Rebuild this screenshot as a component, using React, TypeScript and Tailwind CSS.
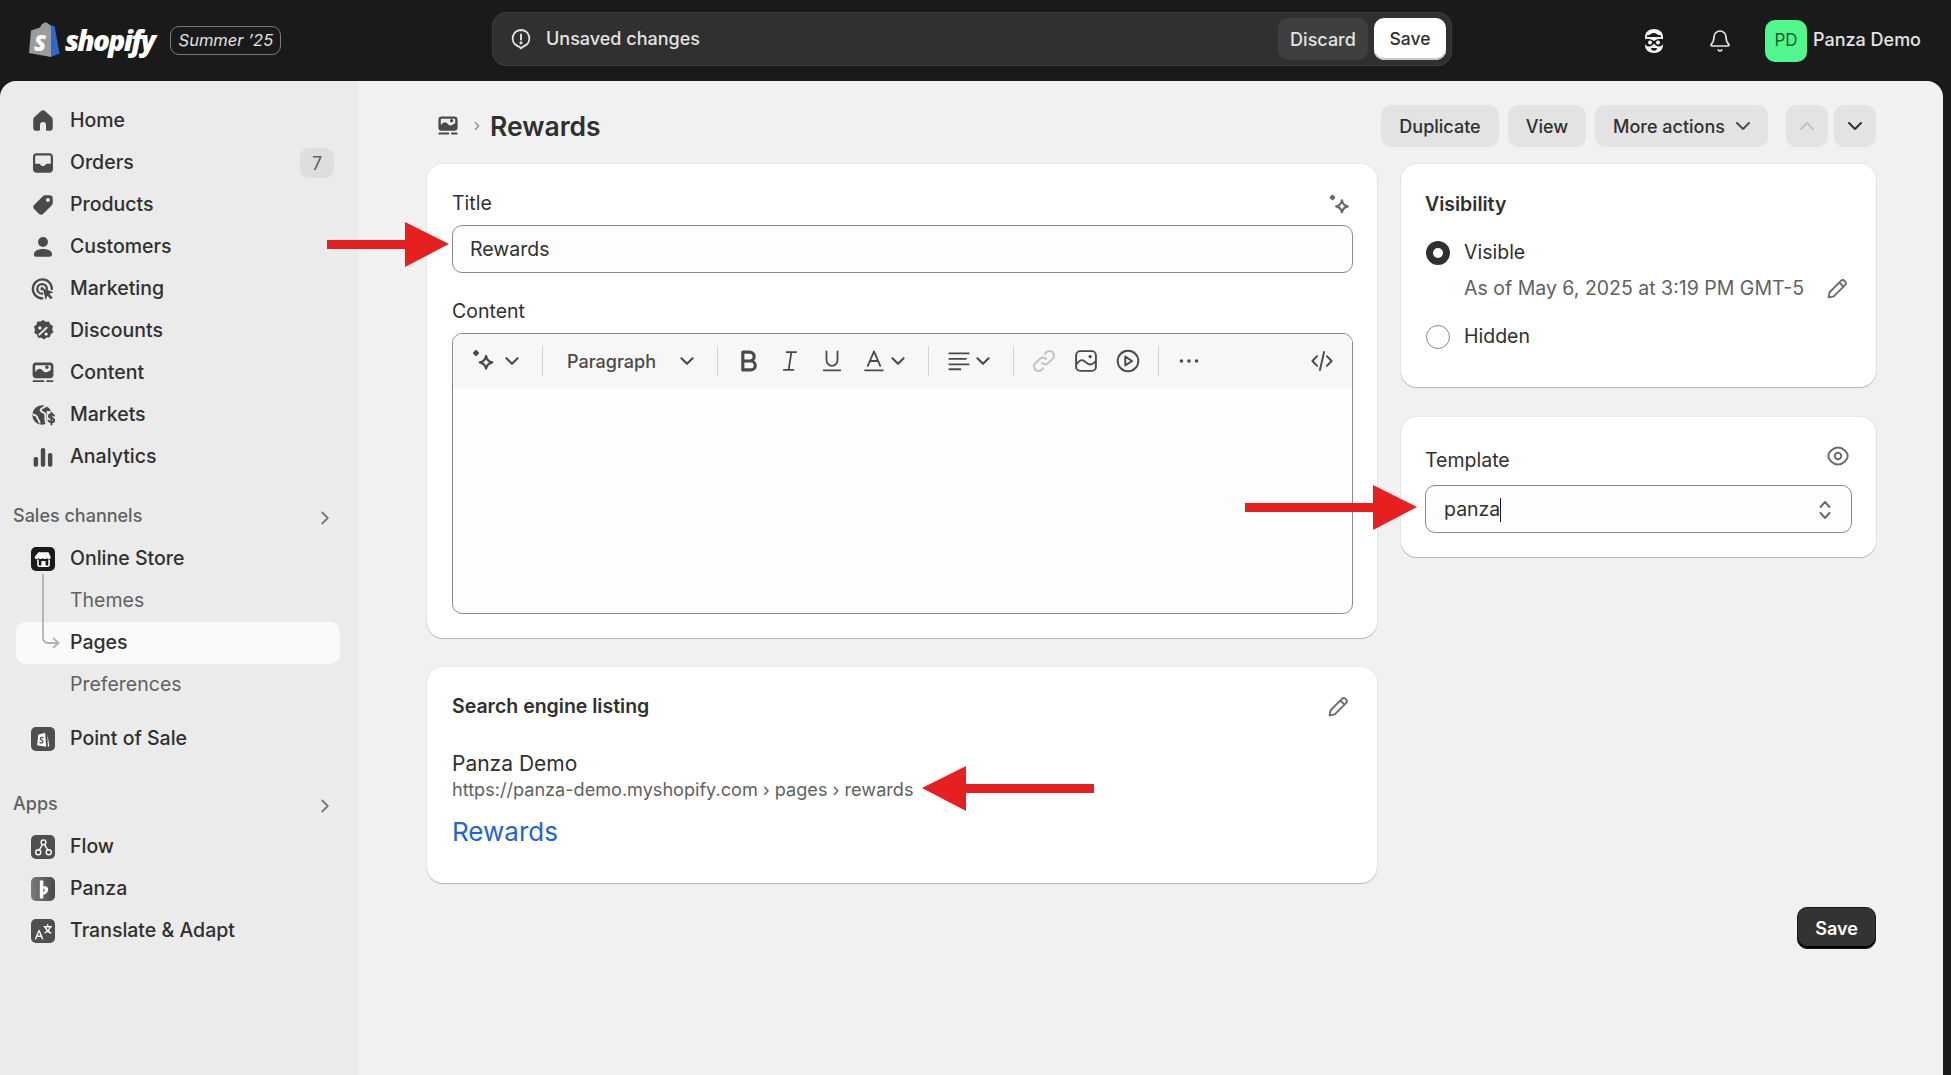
import { ChevronDown, ChevronRight, ChevronUp, Bell } from "lucide-react";
import type { ReactNode } from "react";

const ic = "w-[26px] h-[26px] shrink-0";

function Glyph({ children, className = ic }: { children: ReactNode; className?: string }) {
  return (
    <svg viewBox="0 0 20 20" fill="#4a4a4a" className={className}>
      {children}
    </svg>
  );
}

const HomeIcon = () => (
  <Glyph>
    <path d="M10 1.800c-.6 0-1.200.2-1.700.7L3.400 7c-.6.5-.9 1.200-.9 2v6.300c0 1.300 1 2.200 2.200 2.200h2c.6 0 1-.4 1-1V13a2.200 2.200 0 0 1 4.600 0v3.500c0 .6.4 1 1 1h2c1.200 0 2.200-.9 2.200-2.200V9c0-.8-.3-1.500-.9-2l-4.900-4.500c-.5-.5-1.100-.7-1.700-.7z" />
  </Glyph>
);
const OrdersIcon = () => (
  <Glyph>
    <path
      fillRule="evenodd"
      d="M5 2.500h10c1.500 0 2.700 1.200 2.700 2.700v9.600c0 1.500-1.200 2.700-2.700 2.700H5c-1.500 0-2.700-1.200-2.700-2.700V5.200C2.300 3.700 3.500 2.500 5 2.500zm-1 8h2.800c.7 0 1 .4 1.300.9.400.7 1 1 1.900 1s1.500-.3 1.900-1c.3-.5.6-.9 1.300-.9H16V5.200c0-.6-.4-1-1-1H5c-.6 0-1 .4-1 1z"
    />
  </Glyph>
);
const ProductsIcon = () => (
  <Glyph>
    <path
      fillRule="evenodd"
      d="M11.800 2.500h3.400c1.300 0 2.300 1 2.300 2.300v3.400c0 .8-.3 1.500-.9 2.100l-6.400 6.400c-1 1-2.500 1-3.400 0l-3.500-3.500c-1-.9-1-2.400 0-3.400l6.400-6.400c.6-.6 1.300-.9 2.100-.9zm2 5.200a1.500 1.500 0 1 0 0-3 1.500 1.500 0 0 0 0 3z"
    />
  </Glyph>
);
const CustomersIcon = () => (
  <Glyph>
    <circle cx="10" cy="6.200" r="3.800" />
    <path d="M3 15.800c0-2.700 3-4.300 7-4.300s7 1.600 7 4.300c0 1-.7 1.700-1.700 1.700H4.700C3.700 17.500 3 16.800 3 15.800z" />
  </Glyph>
);
const MarketingIcon = () => (
  <Glyph>
    <path
      fill="none"
      stroke="#4a4a4a"
      strokeWidth="1.800"
      strokeLinecap="round"
      d="M9.500 17.200A7.300 7.300 0 1 1 16.800 10M9.300 13.600A3.700 3.700 0 1 1 13 9.800"
    />
    <circle cx="9.300" cy="9.800" r="1.300" />
    <path d="M9.800 9.500l8.200 3-3.200 1.300 2.600 2.700-1.400 1.400-2.600-2.700-1.300 3.200z" />
  </Glyph>
);
const DiscountsIcon = () => (
  <Glyph>
    <path
      fillRule="evenodd"
      d="M10 1.500l2.100 1.300 2.500-.2.900 2.300 2.200 1.300-.6 2.400.9 2.400-2 1.500-.7 2.400-2.500.1-2 1.500-2.100-1.400-2.500.1-.8-2.400-2.100-1.400.6-2.400-.9-2.300 2-1.600.6-2.400 2.500-.1zM7.600 6.300a1.300 1.300 0 1 0 0 2.600 1.300 1.300 0 0 0 0-2.600zm4.800 4.800a1.300 1.300 0 1 0 0 2.600 1.300 1.300 0 0 0 0-2.600zm.3-4.600L6.200 12.700l1.100 1 6.500-6.200z"
    />
  </Glyph>
);
const ContentIcon = ({ className = ic }: { className?: string }) => (
  <Glyph className={className}>
    <path
      fillRule="evenodd"
      d="M4.500 2h11C16.900 2 18 3.100 18 4.500v7c0 1.400-1.100 2.500-2.500 2.500h-11C3.100 14 2 12.900 2 11.500v-7C2 3.100 3.100 2 4.500 2zM4 9.200c1.300-1.600 2.500-2.400 3.500-2.400 1.800 0 2.600 2.700 4.500 2.700 1.100 0 2.400-.6 4-1.900V4.500c0-.3-.2-.5-.5-.5h-11c-.3 0-.5.2-.5.500zM13 7a1.400 1.400 0 1 0 0-2.800A1.400 1.400 0 0 0 13 7z"
    />
    <rect x="2" y="15.500" width="9" height="1.500" rx=".7" />
    <rect x="12.500" y="15.500" width="5.500" height="1.500" rx=".7" />
  </Glyph>
);
const MarketsIcon = () => (
  <Glyph>
    <circle cx="9.300" cy="10" r="7.500" />
    <path fill="none" stroke="#ebebeb" strokeWidth="1.500" d="M12.500 2.500c-.8 2.300-3.800 1.500-4.300 3.500s3 1.500 3.500 3.500-.6 3.500 1 7.500M2 9.500c2 .3 3.400 1.500 3.800 3 .3 1.200 1.500 1.500 1.700 4" />
    <rect x="12.800" y="7" width="7.200" height="12" fill="#ebebeb" />
    <path
      fill="none"
      stroke="#4a4a4a"
      strokeWidth="1.500"
      strokeLinecap="round"
      d="M18.400 10.500c-.3-.7-1-1.100-1.900-1.100-1.100 0-1.900.6-1.900 1.500 0 2 4 1.100 4 3.200 0 .9-.9 1.500-2 1.500-1 0-1.800-.4-2.200-1.200M16.500 8.200v9.200"
    />
  </Glyph>
);
const AnalyticsIcon = () => (
  <Glyph>
    <rect x="2.800" y="10" width="3.400" height="7.500" rx="1.400" />
    <rect x="8.300" y="3" width="3.400" height="14.500" rx="1.400" />
    <rect x="13.800" y="7" width="3.400" height="10.500" rx="1.400" />
  </Glyph>
);
const OnlineStoreIcon = () => (
  <span className="ml-[1px] w-[24px] h-[24px] rounded-[5px] bg-[#1a1a1a] flex items-center justify-center shrink-0">
    <svg viewBox="0 0 20 20" className="w-[21px] h-[21px]">
      <path fill="#fff" d="M5.200 3h9.600l2 4.300c.3 1.300-.6 2.300-1.700 2.300-.9 0-1.600-.5-1.900-1.100-.4.600-1.100 1.100-2 1.100-.9 0-1.600-.5-2-1.100-.4.600-1.100 1.100-2 1.100-.9 0-1.600-.5-1.900-1.100-.3.600-1 1.100-1.900 1.100-1.100 0-2-1-1.700-2.300z" />
      <path fill="none" stroke="#fff" strokeWidth="1.500" d="M4.700 10v5.200c0 .7.500 1.200 1.200 1.200h8.200c.7 0 1.200-.5 1.200-1.200V10" />
      <rect x="8" y="11.500" width="4" height="5" fill="#fff" />
    </svg>
  </span>
);
function AppBox({ children, className = "bg-[#4f4f4f]" }: { children: ReactNode; className?: string }) {
  return (
    <span className={`ml-[1px] w-[24px] h-[24px] rounded-[5px] flex items-center justify-center shrink-0 ${className}`}>
      <svg viewBox="0 0 20 20" className="w-[21px] h-[21px]">
        {children}
      </svg>
    </span>
  );
}
const PosIcon = () => (
  <AppBox>
    <path fill="#fff" d="M5 5.500l6.500-2 1 13.500-8.500-1.500z" />
    <path fill="#fff" d="M13.800 5l1.700 11.500-1.400.3z" />
    <path fill="none" stroke="#4f4f4f" strokeWidth="1.300" strokeLinecap="round" d="M9.700 8.200c-1.500-.6-2.700 0-2.700 1 0 1.300 2.300 1.200 2.300 2.700 0 1.200-1.400 1.700-2.700 1" />
  </AppBox>
);
const FlowIcon = () => (
  <AppBox>
    <g fill="none" stroke="#fff" strokeWidth="1.300">
      <circle cx="10" cy="5" r="2.300" />
      <circle cx="5" cy="14.500" r="2.400" />
      <circle cx="15" cy="14.500" r="2.400" />
      <path d="M9 7.200l-3 5M11 7.200l3 5" />
    </g>
  </AppBox>
);
const PanzaIcon = () => (
  <AppBox className="bg-gradient-to-r from-[#7a7a7a] to-[#4a4a4a]">
    <path fill="#fff" d="M6.500 1.500h3.300v5.300h1.500c2 0 3.200 1.300 3.200 3.300 0 2.500-2 4.400-4.700 5.100v3.300H6.500zM9.800 8.800v3.700c.8-.4 1.300-1 1.300-1.900 0-1-.5-1.800-1.300-1.800z" />
  </AppBox>
);
const TranslateIcon = () => (
  <AppBox>
    <path fill="none" stroke="#fff" strokeWidth="1.300" strokeLinecap="round" strokeLinejoin="round" d="M2.500 17l3.300-8 3.300 8M3.800 14.500h4M10.500 5.500h7M14 3.500v2M11.500 11c2.500-1 4.200-3 4.700-5.500M12 6.500c.8 2.300 2.500 4 5 5" />
  </AppBox>
);
const Sparkle = ({ className = "w-[24px] h-[24px]", color = "#4a4a4a", box = "0 0 20 20" }: { className?: string; color?: string; box?: string }) => (
  <svg viewBox={box} className={className}>
    <rect x="2.400" y="2.400" width="3.600" height="3.600" rx=".8" fill={color} transform="rotate(45 4.200 4.200)" />
    <path fill="none" stroke={color} strokeWidth="1.700" strokeLinejoin="round" d="M11.500 6.500c.6 2.800 1.700 4 4.500 4.500-2.800.6-3.900 1.700-4.500 4.500-.6-2.800-1.700-3.900-4.500-4.500 2.800-.5 3.900-1.700 4.500-4.500z" />
  </svg>
);
const Pencil = () => (
  <svg viewBox="0 0 20 20" fill="none" stroke="#6b6b6b" strokeWidth="1.400" strokeLinejoin="round" className="w-[26px] h-[26px] mr-[2px]">
    <path d="M3.500 16.500l.8-4L13 3.800c.8-.8 2-.8 2.800 0l.4.400c.8.800.8 2 0 2.800L7.500 15.700zM11.800 5l3.200 3.200" />
  </svg>
);

function Arrow({ x, y, w, len, left }: { x: string; y: string; w: string; len: number; left?: boolean }) {
  // annotation arrows sitting on top of the screenshot
  const d = left
    ? `M0 22L44 0V18H${len}V27H44V45z`
    : `M${len} 22L${len - 44} 0V18H0V27H${len - 44}V45z`;
  return (
    <svg viewBox={`0 0 ${len} 46`} className={`absolute ${x} ${y} ${w} h-[46px]`}>
      <path fill="#e62020" d={d} />
    </svg>
  );
}

function NavItem({ icon, label, badge }: { icon: ReactNode; label: string; badge?: string }) {
  return (
    <div className="h-[42px] flex items-center pl-[30px] pr-[24px]">
      <span className="w-[40px] flex items-center">{icon}</span>
      <span className="text-[19.500px] text-[#303030] font-[450]">{label}</span>
      {badge && (
        <span className="ml-auto w-[34px] h-[30px] rounded-[9px] bg-[#dedede] text-[#616161] text-[18px] flex items-center justify-center">
          {badge}
        </span>
      )}
    </div>
  );
}

function SectionHead({ label }: { label: string }) {
  return (
    <div className="flex items-center justify-between pl-[13px] pr-[22px] h-[42px] mb-[2px]">
      <span className="text-[18px] font-[550] text-[#616161]">{label}</span>
      <ChevronRight className="w-[22px] h-[22px] mt-[5px] text-[#7a7a7a]" strokeWidth={2} />
    </div>
  );
}

function Sidebar() {
  return (
    <aside className="w-[358px] shrink-0 bg-[#ebebeb] pt-[19px]">
      <NavItem icon={<HomeIcon />} label="Home" />
      <NavItem icon={<OrdersIcon />} label="Orders" badge="7" />
      <NavItem icon={<ProductsIcon />} label="Products" />
      <NavItem icon={<CustomersIcon />} label="Customers" />
      <NavItem icon={<MarketingIcon />} label="Marketing" />
      <NavItem icon={<DiscountsIcon />} label="Discounts" />
      <NavItem icon={<ContentIcon />} label="Content" />
      <NavItem icon={<MarketsIcon />} label="Markets" />
      <NavItem icon={<AnalyticsIcon />} label="Analytics" />

      <div className="mt-[16px]">
        <SectionHead label="Sales channels" />
      </div>
      <div className="relative">
        <NavItem icon={<OnlineStoreIcon />} label="Online Store" />
        <div className="h-[42px] flex items-center pl-[70px] text-[19.500px] text-[#616161]">Themes</div>
        <div className="ml-[16px] mr-[18px] h-[42px] flex items-center pl-[54px] rounded-[10px] bg-[#fafafa] text-[19.500px] font-[550] text-[#303030]">
          Pages
        </div>
        <div className="h-[42px] flex items-center pl-[70px] text-[19.500px] text-[#616161]">Preferences</div>
        <svg className="absolute left-[40px] top-[36px] w-[22px] h-[76px]" viewBox="0 0 22 76" fill="none" stroke="#b5b0b5" strokeWidth="1.800">
          <path d="M3 0V63c0 4 1 6 5 6H18M13 64l5.500 5-5.500 5" />
        </svg>
      </div>
      <div className="mt-[12px]">
        <NavItem icon={<PosIcon />} label="Point of Sale" />
      </div>

      <div className="mt-[22px]">
        <SectionHead label="Apps" />
      </div>
      <NavItem icon={<FlowIcon />} label="Flow" />
      <NavItem icon={<PanzaIcon />} label="Panza" />
      <NavItem icon={<TranslateIcon />} label="Translate & Adapt" />
    </aside>
  );
}

function TopBar() {
  return (
    <header className="h-[81px] shrink-0 flex items-center pl-[29px] text-white">
      <svg viewBox="0 0 32 36" className="w-[32px] h-[36px] -mt-[2px]">
        <path fill="#9b9b9f" d="M2 8.500l9-3c1-3 3.500-5 5.500-5 1.300 0 2.300.6 3 1.500L22 3.500V35L0 31z" />
        <path fill="#2f66cf" d="M22 3.500l3.500.5L30.500 31.500 22 35z" />
        <path fill="none" stroke="#9b9b9f" strokeWidth="1.200" d="M12 8c.5-4 3-6.500 5-6.500s3 2.500 3 5" />
        <text x="5" y="29" fontSize="22" fontWeight="800" fontStyle="italic" fill="#fff" fontFamily="Open Sans, sans-serif">S</text>
      </svg>
      <span className="ml-[4px] [font-family:'Open_Sans',sans-serif] italic font-extrabold text-[28px] tracking-[-1.700px] leading-none -mt-[2px]">
        shopify
      </span>
      <span className="ml-[16px] w-[111px] h-[29px] rounded-[9px] border border-[#7a7a7a] flex items-center justify-center italic text-[16.500px] text-[#e3e3e3] -mt-[1px]">
        Summer ’25
      </span>

      <div className="absolute left-[492px] top-[12px] w-[960px] h-[54px] rounded-[14px] bg-[#303030] border border-[#3d3d3d] flex items-center pl-[16px] pr-[5px]">
        <svg viewBox="0 0 20 20" fill="none" stroke="#e3e3e3" strokeWidth="1.600" className="w-[24px] h-[24px]">
          <path strokeLinejoin="round" d="M10 2.500a7 7 0 0 1 3 13.300c-1 .5-2 1-3 2-1-1-2-1.500-3-2A7 7 0 0 1 10 2.500z" />
          <path strokeLinecap="round" d="M10 6.300v4.200" />
          <circle cx="10" cy="13.200" r=".5" fill="#e3e3e3" />
        </svg>
        <span className="ml-[13px] -mt-[1px] text-[18px] font-[500] text-[#e3e3e3]">Unsaved changes</span>
        <button className="ml-auto w-[90px] h-[42px] rounded-[10px] bg-[#3f3f3f] text-[18px] font-[550] text-[#e3e3e3]">Discard</button>
        <button className="ml-[6px] w-[72px] h-[42px] rounded-[10px] bg-white shadow-[inset_0_-2px_0_#c9c9c9] text-[17.500px] font-[550] text-[#303030]">Save</button>
      </div>

      <div className="ml-auto flex items-center pr-[30px]">
        <svg viewBox="0 0 24 26" className="w-[24px] h-[26px]">
          <path fill="#f5f5f5" d="M12 1c5 0 9 3 9 8v8c0 5-4 8-9 8s-9-3-9-8V9c0-5 4-8 9-8z" />
          <path fill="#1a1a1a" d="M5 7c3 1 4-2 7-2 2 0 3 1 4 2 2 0 3 0 3 1v1H5z" />
          <path fill="#1a1a1a" d="M2.500 11.500c3-1.500 6-.5 9.500 1.500 3.500-2 6.500-3 9.500-1.500v2c0 3-2 5-4.500 5-2.500 0-4-2-5-3-1 1-2.500 3-5 3-2.500 0-4.500-2-4.500-5z" />
          <circle cx="8" cy="14.500" r="2" fill="#f5f5f5" />
          <circle cx="16" cy="14.500" r="2" fill="#f5f5f5" />
          <path fill="#1a1a1a" d="M9 20h6c0 1.800-1.300 2.800-3 2.800S9 21.800 9 20z" />
        </svg>
        <Bell className="ml-[42px] w-[24px] h-[24px] text-[#e3e3e3]" strokeWidth={1.700} />
        <span className="ml-[33px] w-[42px] h-[42px] rounded-[10px] bg-[#4ff78d] text-[#1f5c3a] text-[17px] flex items-center justify-center">PD</span>
        <span className="ml-[6px] -mt-[2px] text-[18px] font-[550] text-[#e3e3e3]">Panza Demo</span>
      </div>
    </header>
  );
}

// viewBox is cropped so the 22px slots draw the glyphs a little larger, like the editor in the shot
const tbBtn = "w-[22px] h-[22px] shrink-0 overflow-visible";
const tbBox = "2 2 16 16";
const tbChev = "w-[16px] h-[16px] shrink-0 text-[#4a4a4a] scale-[1.4]";

function Divider({ className }: { className: string }) {
  return <span className={`w-px h-[30px] bg-[#d4d4d4] shrink-0 ${className}`} />;
}

function Toolbar() {
  return (
    <div className="h-[54px] bg-[#f7f7f7] rounded-t-[9px] flex items-center">
      <Sparkle className={`${tbBtn} ml-[20px]`} box={tbBox} />
      <ChevronDown className={`${tbChev} ml-[9px]`} strokeWidth={2.200} />
      <Divider className="ml-[22px]" />
      <span className="ml-[24px] w-[89px] text-[18px] text-[#4a4a4a] font-[450]">Paragraph</span>
      <ChevronDown className={`${tbChev} ml-[23px]`} strokeWidth={2.200} />
      <Divider className="ml-[22px]" />
      <svg viewBox={tbBox} className={`${tbBtn} ml-[20px]`} fill="none" stroke="#4a4a4a" strokeWidth="2.300" strokeLinejoin="round">
        <path d="M5.500 3.500h5a3.200 3.200 0 0 1 0 6.500h-5zM5.500 10h5.800a3.200 3.200 0 0 1 0 6.500H5.500z" />
      </svg>
      <svg viewBox={tbBox} className={`${tbBtn} ml-[19px]`} fill="none" stroke="#4a4a4a" strokeWidth="1.300" strokeLinecap="round">
        <path d="M7.500 3.500h7M5.500 16.500h7M11 3.500l-2 13" />
      </svg>
      <svg viewBox={tbBox} className={`${tbBtn} ml-[20px]`} fill="none" stroke="#4a4a4a" strokeWidth="1.300" strokeLinecap="round">
        <path d="M6 3v6.500a4 4 0 0 0 8 0V3M4 16.800h12" />
      </svg>
      <svg viewBox={tbBox} className={`${tbBtn} ml-[20px]`} fill="none" stroke="#4a4a4a" strokeWidth="1.300" strokeLinecap="round" strokeLinejoin="round">
        <path d="M5.500 13.500L10 3l4.500 10.500M7 10h6M3.500 16.800h13" />
      </svg>
      <ChevronDown className={`${tbChev} ml-[5px]`} strokeWidth={2.200} />
      <Divider className="ml-[22px]" />
      <svg viewBox={tbBox} className={`${tbBtn} ml-[19px]`} fill="none" stroke="#4a4a4a" strokeWidth="1.300" strokeLinecap="round">
        <path d="M3 4.500h14M3 8.500h12M3 12.500h14M3 16h8" />
      </svg>
      <ChevronDown className={`${tbChev} ml-[5px]`} strokeWidth={2.200} />
      <Divider className="ml-[22px]" />
      <svg viewBox={tbBox} className={`${tbBtn} ml-[19px]`} fill="none" stroke="#c4c4c4" strokeWidth="1.500" strokeLinecap="round">
        <path d="M8.500 11.500a3.200 3.200 0 0 0 4.600 0l3.200-3.200a3.200 3.200 0 0 0-4.600-4.600l-1 1M11.500 8.500a3.200 3.200 0 0 0-4.600 0l-3.200 3.200a3.200 3.200 0 0 0 4.600 4.600l1-1" />
      </svg>
      <svg viewBox={tbBox} className={`${tbBtn} ml-[20px]`} fill="none" stroke="#4a4a4a" strokeWidth="1.400" strokeLinejoin="round">
        <rect x="2.800" y="2.800" width="14.400" height="14.400" rx="3" />
        <path d="M2.800 12.500c2-2.500 3.500-3.500 5-3 2 .7 3 3 5 3 1.800 0 3.200-1 4.400-2.500" />
        <circle cx="13" cy="6.800" r="1.200" fill="#4a4a4a" stroke="none" />
      </svg>
      <svg viewBox={tbBox} className={`${tbBtn} ml-[20px]`} fill="none" stroke="#4a4a4a" strokeWidth="1.400" strokeLinejoin="round">
        <circle cx="10" cy="10" r="7.500" />
        <path d="M8 6.800v6.400l5-3.200z" />
      </svg>
      <Divider className="ml-[19px]" />
      <svg viewBox={tbBox} className={`${tbBtn} ml-[19px]`} fill="#4a4a4a">
        <circle cx="4.500" cy="10" r="1.300" />
        <circle cx="10" cy="10" r="1.300" />
        <circle cx="15.500" cy="10" r="1.300" />
      </svg>
      <svg viewBox={tbBox} className={`${tbBtn} ml-auto mr-[19px]`} fill="none" stroke="#4a4a4a" strokeWidth="1.400" strokeLinecap="round" strokeLinejoin="round">
        <path d="M6.500 6.500L3 10l3.500 3.500M13.500 6.500L17 10l-3.500 3.500M11.500 3.500l-3 13" />
      </svg>
    </div>
  );
}

const card = "bg-white rounded-[16px] shadow-[0_0_0_1px_rgba(0,0,0,0.03),0_1px_1px_rgba(0,0,0,0.22)]";
const label = "h-[24px] flex items-center text-[19.500px] text-[#303030]";
const input = "h-[48px] rounded-[10px] border border-[#8a8a8a] bg-[#fdfdfd] flex items-center pt-[1px] text-[19.500px] text-[#303030]";
const grayBtn = "h-[42px] rounded-[10px] bg-[#e3e3e3] text-[18px] font-[550] text-[#303030] flex items-center justify-center";

function PageHeader() {
  return (
    <div className="flex items-center h-[42px] mb-[17px]">
      <ContentIcon className="ml-[9px] w-[24px] h-[24px]" />
      <ChevronRight className="ml-[10px] w-[14px] h-[14px] text-[#8a8a8a]" />
      <h1 className="ml-[6px] mt-[1px] text-[26.500px] font-[600] text-[#303030]">Rewards</h1>
      <div className="ml-auto flex items-center">
        <button className={`${grayBtn} w-[118px]`}>Duplicate</button>
        <button className={`${grayBtn} w-[78px] ml-[9px]`}>View</button>
        <button className={`${grayBtn} w-[173px] ml-[9px] !justify-start pl-[18px] gap-[6px]`}>
          More actions <ChevronDown className="w-[24px] h-[24px] text-[#4a4a4a]" strokeWidth={2} />
        </button>
        <button className={`${grayBtn} w-[42px] ml-[18px]`}>
          <ChevronUp className="w-[24px] h-[24px] text-[#c4c4c4]" strokeWidth={2} />
        </button>
        <button className={`${grayBtn} w-[42px] ml-[6px]`}>
          <ChevronDown className="w-[24px] h-[24px] text-[#303030]" strokeWidth={2} />
        </button>
      </div>
    </div>
  );
}

function LeftColumn() {
  return (
    <div className="w-[950px] shrink-0 flex flex-col gap-[29px]">
      <section className={`${card} pl-[25px] pr-[24px] pt-[28px] pb-[24px]`}>
        <div className="flex items-center justify-between h-[24px]">
          <div className={label}>Title</div>
          <Sparkle className="w-[26px] h-[26px] mt-[2px]" color="#6b6b6b" />
        </div>
        <div className={`${input} pl-[17px] mt-[9px]`}>Rewards</div>
        <div className={`${label} mt-[27px]`}>Content</div>
        <div className="mt-[9px] h-[281px] rounded-[10px] border border-[#8a8a8a] bg-[#fdfdfd]">
          <Toolbar />
        </div>
      </section>
      <section className={`${card} pl-[25px] pr-[24px] pt-[28px] pb-[36px]`}>
        <div className="flex items-center justify-between h-[24px]">
          <h2 className="text-[19.500px] font-[600] text-[#303030]">Search engine listing</h2>
          <Pencil />
        </div>
        <div className="mt-[33px] h-[24px] flex items-center text-[21px] text-[#303030]">Panza Demo</div>
        <div className="mt-[3px] h-[22px] flex items-center text-[18.100px] text-[#616161]">https://panza-demo.myshopify.com › pages › rewards</div>
        <div className="mt-[14px] h-[32px] flex items-center text-[26px] text-[#2463d6]">Rewards</div>
      </section>
    </div>
  );
}

function RightColumn() {
  return (
    <div className="w-[475px] shrink-0 flex flex-col gap-[30px]">
      <section className={`${card} h-[223px] pl-[24px] pr-[24px] pt-[29px]`}>
        <h2 className="h-[24px] flex items-center text-[19.500px] font-[600] text-[#303030]">Visibility</h2>
        <div className="mt-[24px] h-[24px] flex items-center pl-[1px]">
          <span className="w-[24px] h-[24px] rounded-full border-[7px] border-[#303030] bg-white" />
          <span className="ml-[14px] text-[19.500px] text-[#303030]">Visible</span>
        </div>
        <div className="mt-[12px] h-[24px] flex items-center pl-[39px] text-[19.500px] text-[#616161]">
          As of May 6, 2025 at 3:19 PM GMT-5
          <span className="ml-auto"><Pencil /></span>
        </div>
        <div className="mt-[24px] h-[24px] flex items-center pl-[1px]">
          <span className="w-[24px] h-[24px] rounded-full border border-[#8a8a8a] bg-[#fdfdfd]" />
          <span className="ml-[14px] text-[19.500px] text-[#303030]">Hidden</span>
        </div>
      </section>
      <section className={`${card} h-[140px] px-[24px] pt-[32px]`}>
        <div className="flex items-start justify-between h-[24px]">
          <div className={label}>Template</div>
          <svg viewBox="0 0 20 20" fill="none" stroke="#6b6b6b" strokeWidth="1.500" className="w-[26px] h-[26px] -mt-[6px] mr-[1px]">
            <path strokeLinejoin="round" d="M10 3.500c4 0 7.500 4 7.500 6.500S14 16.500 10 16.500 2.500 12.500 2.500 10 6 3.500 10 3.500z" />
            <circle cx="10" cy="10" r="2.500" />
          </svg>
        </div>
        <div className={`${input} pl-[18px] mt-[12px] relative`}>
          panza<span className="w-px h-[24px] bg-[#1a1a1a]" />
          <svg viewBox="0 0 24 24" fill="none" stroke="#6b6b6b" strokeWidth="2" strokeLinecap="round" strokeLinejoin="round" className="absolute right-[14px] w-[24px] h-[24px]">
            <path d="M7.500 9L12 4l4.500 5M7.500 15l4.500 5 4.500-5" />
          </svg>
        </div>
      </section>
    </div>
  );
}

export default function App() {
  return (
    <div className="relative w-[1951px] h-[1075px] overflow-hidden bg-[#1a1a1a] flex flex-col [font-family:Inter,sans-serif]">
      <TopBar />
      <div className="flex flex-1 mr-[8px] rounded-t-[16px] overflow-hidden">
        <Sidebar />
        <main className="flex-1 bg-[#f1f1f1] pl-[69px] pr-[67px] pt-[24px]">
          <PageHeader />
          <div className="flex gap-[24px]">
            <LeftColumn />
            <RightColumn />
          </div>
          <div className="flex justify-end mt-[24px]">
            <button className="w-[79px] h-[42px] rounded-[10px] bg-[#333333] border border-[#1a1a1a] shadow-[inset_0_-2px_0_#000] text-[18px] font-[600] text-white">
              Save
            </button>
          </div>
        </main>
      </div>
      <Arrow x="left-[327px]" y="top-[222px]" w="w-[122px]" len={122} />
      <Arrow x="left-[1245px]" y="top-[485px]" w="w-[172px]" len={172} />
      <Arrow x="left-[922px]" y="top-[766px]" w="w-[172px]" len={172} left />
    </div>
  );
}
